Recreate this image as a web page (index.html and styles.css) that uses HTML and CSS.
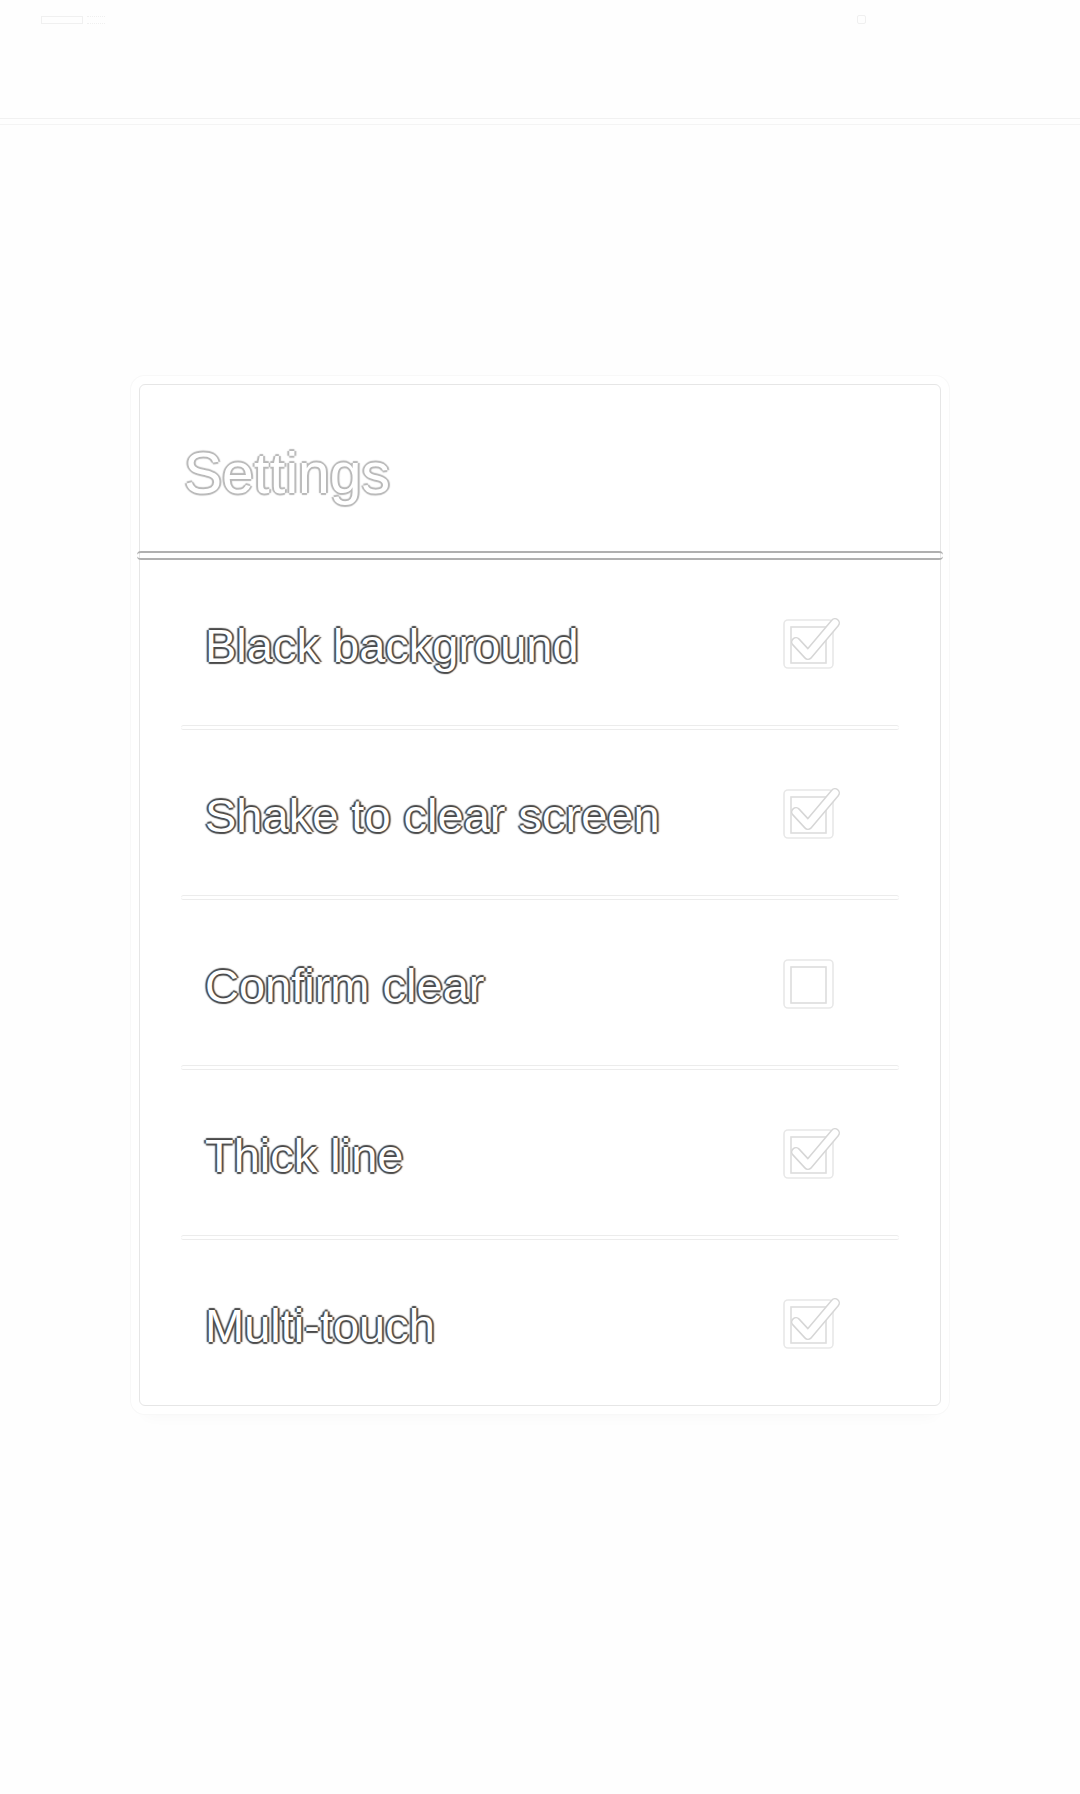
FILE: index.html
```html
<!DOCTYPE html>
<html lang="en">
<head>
<meta charset="utf-8">
<title>Settings</title>
<link rel="stylesheet" href="styles.css">
</head>
<body>
<header class="appbar">
  <div class="status">
    <span class="status-left"><span class="bat"></span><span class="dots"></span></span>
    <span class="status-right"></span>
  </div>
</header>
<div class="appbar-shadow"></div>

<main class="stage">
  <section class="dialog">
    <div class="dialog-head"><h1 class="title">Settings</h1></div>
    <div class="head-rule"></div>
    <ul class="list">
      <li class="row"><span class="label">Black background</span>
        <svg class="cb" viewBox="0 0 60 56" width="60" height="56"><rect x="2" y="5" width="49" height="48" rx="4" class="box-o"/><rect x="9" y="12" width="35" height="36" class="box-i"/><path d="M14 27 L26 40 L53 8" class="chk-o"/><path d="M14 27 L26 40 L53 8" class="chk-i"/></svg>
      </li>
      <li class="sep"></li>
      <li class="row"><span class="label">Shake to clear screen</span>
        <svg class="cb" viewBox="0 0 60 56" width="60" height="56"><rect x="2" y="5" width="49" height="48" rx="4" class="box-o"/><rect x="9" y="12" width="35" height="36" class="box-i"/><path d="M14 27 L26 40 L53 8" class="chk-o"/><path d="M14 27 L26 40 L53 8" class="chk-i"/></svg>
      </li>
      <li class="sep"></li>
      <li class="row"><span class="label">Confirm clear</span>
        <svg class="cb" viewBox="0 0 60 56" width="60" height="56"><rect x="2" y="5" width="49" height="48" rx="4" class="box-o"/><rect x="9" y="12" width="35" height="36" class="box-i"/></svg>
      </li>
      <li class="sep"></li>
      <li class="row"><span class="label">Thick line</span>
        <svg class="cb" viewBox="0 0 60 56" width="60" height="56"><rect x="2" y="5" width="49" height="48" rx="4" class="box-o"/><rect x="9" y="12" width="35" height="36" class="box-i"/><path d="M14 27 L26 40 L53 8" class="chk-o"/><path d="M14 27 L26 40 L53 8" class="chk-i"/></svg>
      </li>
      <li class="sep"></li>
      <li class="row"><span class="label">Multi-touch</span>
        <svg class="cb" viewBox="0 0 60 56" width="60" height="56"><rect x="2" y="5" width="49" height="48" rx="4" class="box-o"/><rect x="9" y="12" width="35" height="36" class="box-i"/><path d="M14 27 L26 40 L53 8" class="chk-o"/><path d="M14 27 L26 40 L53 8" class="chk-i"/></svg>
      </li>
    </ul>
  </section>
</main>
</body>
</html>
```
FILE: styles.css
```css
html, body {
  margin: 0;
  padding: 0;
  background: #fefefe;
  font-family: "Liberation Sans", Arial, sans-serif;
}
body {
  width: 1080px;
  height: 1794px;
  overflow: hidden;
}
.appbar {
  height: 119px;
  border-bottom: 1px solid #f1f1f1;
  box-sizing: border-box;
}
.status {
  display: flex;
  justify-content: space-between;
  padding: 15px 214px 0 41px;
}
.status-left {
  display: flex;
  align-items: center;
  gap: 4px;
}
.bat {
  display: block;
  width: 40px;
  height: 6px;
  border: 1px solid #f0f0f0;
}
.dots {
  display: block;
  width: 18px;
  height: 6px;
  border-top: 1px dotted #f0f0f0;
  border-bottom: 1px dotted #f0f0f0;
}
.status-right {
  display: block;
  width: 7px;
  height: 7px;
  border: 1px solid #f0f0f0;
  border-radius: 2px;
}
.appbar-shadow {
  height: 6px;
  border-bottom: 1px solid #f4f4f4;
  box-sizing: border-box;
}
.stage {
  padding-top: 259px;
}
.dialog {
  width: 802px;
  margin: 0 auto;
  height: 1022px;
  box-sizing: border-box;
  border: 1px solid #e6e6e6;
  border-radius: 6px;
  background: #fff;
  box-shadow: 0 0 0 8px #fff, 0 0 0 9px #f8f8f8, 0 16px 14px -6px rgba(0,0,0,0.03);
  display: flex;
  flex-direction: column;
}
.dialog-head {
  height: 167px;
  box-sizing: border-box;
  padding: 58px 0 0 44px;
}
.title {
  margin: 0;
  font-size: 57px;
  line-height: 60px;
  font-weight: 400;
  color: #fff;
  text-shadow: -2px 0 1px #b8b8b8, 2px 0 1px #b8b8b8, 0 -2px 1px #b8b8b8, 0 2px 1px #b8b8b8, 0 0 3px #c8c8c8;
}
.head-rule {
  height: 9px;
  box-sizing: border-box;
  border-top: 2px solid #b0b0b0;
  border-bottom: 2px solid #b0b0b0;
  margin: 0 -3px;
  border-radius: 4px;
}
.list {
  list-style: none;
  margin: 0;
  padding: 0 41px 0 41px;
}
.row {
  height: 165px;
  display: flex;
  align-items: center;
  justify-content: space-between;
  padding: 0 60px 0 24px;
}
.label {
  font-size: 47px;
  line-height: 47px;
  padding-top: 6px;
  color: #fff;
  text-shadow: -2px 0 1px #4a4a4a, 2px 0 1px #4a4a4a, 0 -2px 1px #4a4a4a, 0 2px 1px #4a4a4a, 0 0 3px #999;
}
.sep {
  height: 5px;
  box-sizing: border-box;
  border-top: 1px solid #ececec;
  border-bottom: 1px solid #ececec;
  border-radius: 3px;
}
.cb {
  display: block;
  margin-right: -3px;
}
.box-o {
  fill: none;
  stroke: #e8e8e8;
  stroke-width: 1.6;
}
.box-i {
  fill: none;
  stroke: #dddddd;
  stroke-width: 1.6;
}
.chk-o {
  fill: none;
  stroke: #d6d6d6;
  stroke-width: 10;
  stroke-linecap: round;
  stroke-linejoin: round;
}
.chk-i {
  fill: none;
  stroke: #ffffff;
  stroke-width: 7;
  stroke-linecap: round;
  stroke-linejoin: round;
}
```
